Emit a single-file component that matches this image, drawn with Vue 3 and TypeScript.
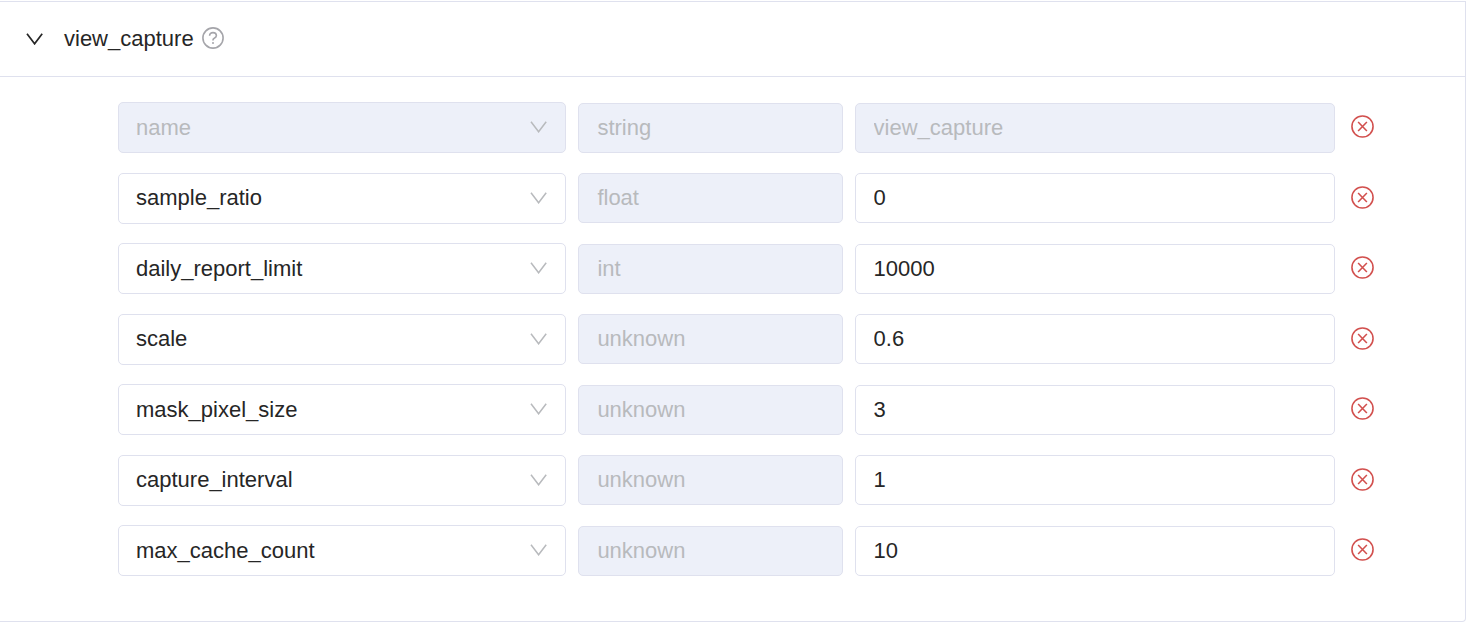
<script setup lang="ts">
import { ref } from 'vue'

interface Param {
  key: string
  type: string
  value: string
  locked: boolean
}

const open = ref(true)

const params = ref<Param[]>([
  { key: 'name', type: 'string', value: 'view_capture', locked: true },
  { key: 'sample_ratio', type: 'float', value: '0', locked: false },
  { key: 'daily_report_limit', type: 'int', value: '10000', locked: false },
  { key: 'scale', type: 'unknown', value: '0.6', locked: false },
  { key: 'mask_pixel_size', type: 'unknown', value: '3', locked: false },
  { key: 'capture_interval', type: 'unknown', value: '1', locked: false },
  { key: 'max_cache_count', type: 'unknown', value: '10', locked: false },
])

const keys: string[] = params.value.map((p) => p.key)

function remove(index: number): void {
  params.value.splice(index, 1)
}
</script>

<template>
  <section class="panel">
    <header class="head">
      <button class="toggle" type="button" :aria-expanded="open" @click="open = !open">
        <svg class="caret" viewBox="0 0 18 12" aria-hidden="true">
          <path d="M1 .8L8.6 10.8L16.2 .8" />
        </svg>
        <span>view_capture</span>
      </button>
      <button class="help" type="button" aria-label="Help">
        <svg viewBox="0 0 22 22" aria-hidden="true">
          <circle cx="11" cy="11" r="10.1" />
          <path d="M7.6 8.8C7.6 6.8 9.1 5.6 11 5.6S14.4 6.8 14.4 8.6C14.4 10 13.4 10.8 12.3 11.3C11.4 11.7 11 12.1 11 13V13.6" />
          <circle class="dot" cx="11" cy="16.1" r="1" />
        </svg>
      </button>
    </header>
    <div v-if="open" class="rows">
      <div v-for="(p, i) in params" :key="i" class="row">
        <div class="pick">
          <select v-model="p.key" class="field" :disabled="p.locked" aria-label="Parameter">
            <option v-for="k in keys" :key="k" :value="k">{{ k }}</option>
          </select>
          <svg class="arrow" viewBox="0 0 18 12" aria-hidden="true">
            <path d="M1 .8L8.6 10.8L16.2 .8" />
          </svg>
        </div>
        <input v-model="p.type" class="field" type="text" disabled aria-label="Type" />
        <input v-model="p.value" class="field" type="text" :disabled="p.locked" aria-label="Value" />
        <button class="remove" type="button" aria-label="Remove" @click="remove(i)">
          <svg viewBox="0 0 22 22" aria-hidden="true">
            <circle cx="11" cy="11" r="10.1" />
            <path d="M6.8 6.7L15.2 15.3M15.2 6.7L6.8 15.3" />
          </svg>
        </button>
      </div>
    </div>
  </section>
</template>

<style>
body {
  background: #fff;
}
</style>

<style scoped>
.panel {
  margin: 1px 6px 8px 0;
  border: 1px solid #dfe1ee;
  border-left: 0;
  border-radius: 0 0 4px 0;
  font-family: "Helvetica Neue", "Liberation Sans", Arial, sans-serif;
  font-size: 22px;
  line-height: 32px;
  color: #262626;
}

.head {
  display: flex;
  align-items: center;
  gap: 8px;
  padding: 21px 26px;
  border-bottom: 1px solid #dfe1ee;
}

button {
  padding: 0;
  border: 0;
  background: none;
  font: inherit;
  color: inherit;
  cursor: pointer;
}

svg {
  display: block;
  flex: none;
  fill: none;
  stroke: currentColor;
}

.toggle {
  display: flex;
  align-items: center;
  gap: 20px;
}

.caret {
  width: 18px;
  height: 12px;
  stroke-width: 1.7;
}

.help {
  padding-bottom: 2px;
  color: #a5a5aa;
}

.help svg {
  width: 22px;
  height: 22px;
  stroke-width: 1.6;
}

.help .dot {
  fill: currentColor;
  stroke: none;
}

.rows {
  display: flex;
  flex-direction: column;
  justify-content: space-between;
  min-height: 474px;
  padding: 25px 91px 45px 118px;
}

.row {
  display: grid;
  grid-template-columns: 448fr 264fr 480fr 27px;
  align-items: center;
  gap: 12px;
}

.pick {
  position: relative;
}

.field {
  display: block;
  box-sizing: border-box;
  width: 100%;
  min-width: 0;
  height: 50px;
  margin: 0;
  padding: 0 18px;
  border: 1px solid #dfe1ee;
  border-radius: 5px;
  background: #fff;
  font: inherit;
  color: #262626;
  appearance: none;
}

select.field {
  height: 51px;
  padding: 0 48px 0 17px;
}

.field:disabled {
  background: #edf0f9;
  color: #b8babd;
  opacity: 1;
}

.arrow {
  position: absolute;
  top: 19px;
  right: 18px;
  width: 18px;
  height: 12px;
  color: #b8babd;
  stroke-width: 1.5;
  pointer-events: none;
}

.remove {
  justify-self: end;
  padding-bottom: 2px;
  color: #d2504e;
}

.remove svg {
  width: 23px;
  height: 23px;
  stroke-width: 1.5;
}
</style>
